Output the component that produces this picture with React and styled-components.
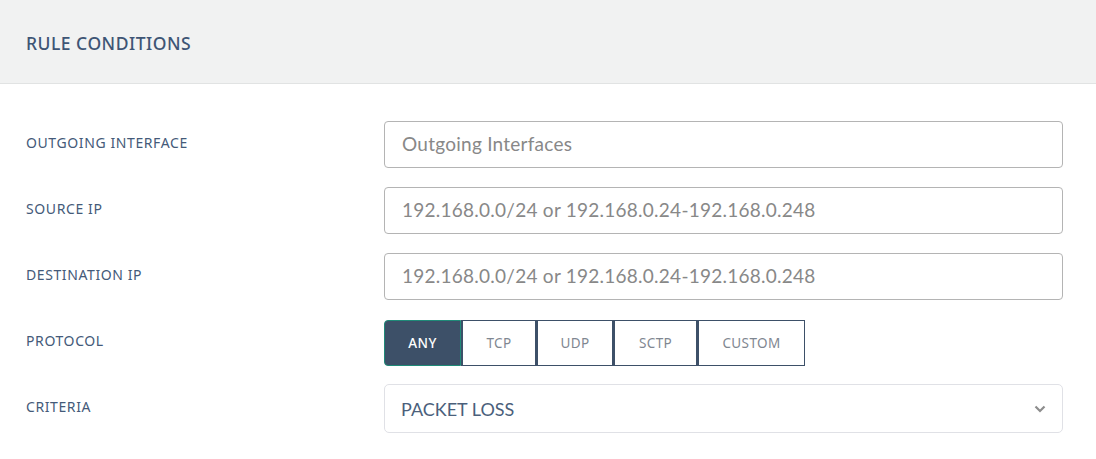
import React, { useState } from 'react'
import styled, { createGlobalStyle } from 'styled-components'

const GlobalStyle = createGlobalStyle`
  body {
    margin: 0;
    background: #fff;
    font-family: 'Noto Sans', 'Open Sans', sans-serif;
  }
  * { box-sizing: border-box; }
`

const Panel = styled.div`
  width: 1096px;
  height: 459px;
  background: #fff;
`

const Header = styled.div`
  height: 84px;
  background: #f1f2f2;
  border-bottom: 1px solid #e1e3e3;
  display: flex;
  align-items: center;
  padding: 3px 26px 0;
`

const Title = styled.h3`
  margin: 0;
  font-size: 17.5px;
  font-weight: 500;
  color: #3e5575;
  letter-spacing: 0.5px;
`

const Body = styled.div`
  padding: 37px 33px 0 26px;
  display: flex;
  flex-direction: column;
  gap: 19px;
`

const Row = styled.div`
  display: grid;
  grid-template-columns: 358px 1fr;
  align-items: center;
`

const Label = styled.label`
  font-size: 14px;
  font-weight: 400;
  color: #445a79;
  letter-spacing: 0.6px;
  transform: translateY(${p => p.shift || -2}px);
`

const Input = styled.input`
  height: 47px;
  width: 100%;
  border: 1px solid #b4b4b4;
  border-radius: 4px;
  padding: 0 17px 2px;
  font-family: 'Lato', sans-serif;
  font-size: 19px;
  letter-spacing: 0.25px;
  color: #444;
  outline: none;
  &::placeholder { color: #888; }
`

const Group = styled.div`
  display: flex;
  height: 46px;
  margin-top: 1px;
`

const Seg = styled.button`
  width: ${p => p.w}px;
  height: 46px;
  font-family: 'Noto Sans', sans-serif;
  font-size: 13.5px;
  font-weight: ${p => (p.active ? 500 : 400)};
  letter-spacing: 0.4px;
  background: ${p => (p.active ? '#3d5068' : '#fff')};
  color: ${p => (p.active ? '#fff' : '#7f8791')};
  border: 1px solid ${p => (p.active ? '#1f8a78' : '#3d5068')};
  border-radius: ${p => (p.first ? '4px 0 0 4px' : '0')};
  border-left: ${p => (p.first ? '1px solid #1f8a78' : '2px solid #3d5068')};
  cursor: pointer;
  padding: 0;
`

const Select = styled.div`
  height: 49px;
  border: 1px solid #e0e1e6;
  border-radius: 5px;
  display: flex;
  align-items: center;
  justify-content: space-between;
  padding: 0 16px 0 16px;
  font-family: 'Lato', sans-serif;
  font-size: 18px;
  color: #4b5f7b;
  margin-top: -1px;
`

const Chevron = () => (
  <svg width="12" height="8" viewBox="0 0 12 8">
    <path d="M1.5 1.5 L6 6 L10.5 1.5" fill="none" stroke="#8d8d8d" strokeWidth="2.2" />
  </svg>
)

const protocols = [
  { name: 'ANY', w: 77 },
  { name: 'TCP', w: 75 },
  { name: 'UDP', w: 77 },
  { name: 'SCTP', w: 84 },
  { name: 'CUSTOM', w: 108 },
]

export default function App() {
  const [proto, setProto] = useState('ANY')
  return (
    <Panel>
      <GlobalStyle />
      <Header>
        <Title>RULE CONDITIONS</Title>
      </Header>
      <Body>
        <Row>
          <Label>OUTGOING INTERFACE</Label>
          <Input placeholder="Outgoing Interfaces" />
        </Row>
        <Row>
          <Label>SOURCE IP</Label>
          <Input placeholder="192.168.0.0/24 or 192.168.0.24-192.168.0.248" />
        </Row>
        <Row>
          <Label>DESTINATION IP</Label>
          <Input placeholder="192.168.0.0/24 or 192.168.0.24-192.168.0.248" />
        </Row>
        <Row>
          <Label>PROTOCOL</Label>
          <Group>
            {protocols.map((p, i) => (
              <Seg
                key={p.name}
                w={p.w}
                first={i === 0}
                active={proto === p.name}
                onClick={() => setProto(p.name)}
              >
                {p.name}
              </Seg>
            ))}
          </Group>
        </Row>
        <Row>
          <Label shift={-3}>CRITERIA</Label>
          <Select>
            PACKET LOSS
            <Chevron />
          </Select>
        </Row>
      </Body>
    </Panel>
  )
}
